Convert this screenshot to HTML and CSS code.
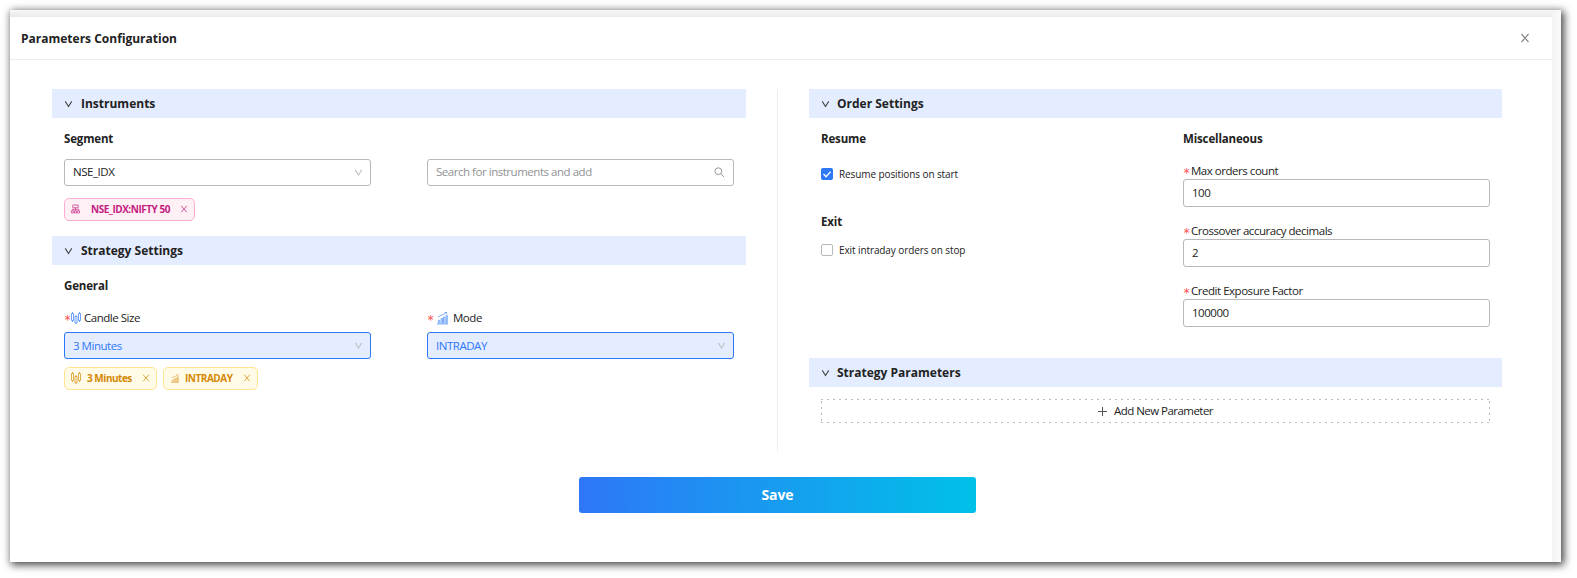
FILE: index.html
```html
<!DOCTYPE html>
<html lang="en">
<head>
<meta charset="utf-8">
<title>Parameters Configuration</title>
<link rel="stylesheet" href="styles.css">
</head>
<body>
<svg width="0" height="0" class="defs">
  <symbol id="down" viewBox="0 0 10 10"><path d="M1.400 2.100 5 7.700 8.600 2.100" fill="none" stroke="currentColor" stroke-width="1.200"/></symbol>
  <symbol id="close" viewBox="0 0 10 10"><path d="M1.500 1 8.500 9M8.500 1 1.500 9" fill="none" stroke="currentColor" stroke-width="1.200"/></symbol>
  <symbol id="candles" viewBox="0 0 10 12"><path d="M.5 1.500h2v7H.5zM4 4.500h2v6.500H4zM7.500 1.500h2v7H7.500zM1.500 0V1.500M1.500 8.500V10M5 3V4.500M5 11v1M8.500 0V1.500M8.500 8.500V10" fill="none" stroke="currentColor" stroke-width=".9"/></symbol>
  <symbol id="chart" viewBox="0 0 12 14"><path d="M0 13.500h12M1.500 13V9.500h1.500V13M4.500 13V7.500H6V13M7.200 13V6h1.500V13M10 13V4h1.200v9M1 6 4.500 4 7 3.300 10 1M8.500 1H10.500V2.500" fill="none" stroke="currentColor" stroke-width=".9"/></symbol>
</svg>
<div class="frame">
  <main class="modal">
    <header class="modal-head"><h1>Parameters Configuration</h1><svg class="close"><use href="#close"/></svg></header>
    <div class="columns">
      <div class="col">
        <section class="instruments">
          <h2><svg><use href="#down"/></svg><span>Instruments</span></h2>
          <div class="body">
            <h3><span>Segment</span></h3>
            <div class="pair">
              <div class="field"><span>NSE_IDX</span><svg class="arrow"><use href="#down"/></svg></div>
              <div class="field search"><span>Search for instruments and add</span><svg class="glass" viewBox="0 0 11 11"><circle cx="4.300" cy="4.200" r="3.400"/><path d="m6.800 6.700 3.400 3.500"/></svg></div>
            </div>
            <div class="tags"><div class="tag pink"><svg class="tree" viewBox="0 0 10 10"><path d="M2 .6h6v3H2zM5 3.600V7M1.500 7V5.300h7V7M.5 7h2.500v2.400H.5zM3.800 7h2.400v2.400H3.800zM7 7h2.500v2.400H7z"/></svg><span>NSE_IDX:NIFTY 50</span><svg class="x"><use href="#close"/></svg></div></div>
          </div>
        </section>
        <section>
          <h2><svg><use href="#down"/></svg><span>Strategy Settings</span></h2>
          <div class="body">
            <h3><span>General</span></h3>
            <div class="pair">
              <div>
                <div class="label"><i>*</i><svg class="candle"><use href="#candles"/></svg><span>Candle Size</span></div>
                <div class="field active"><span>3 Minutes</span><svg class="arrow"><use href="#down"/></svg></div>
              </div>
              <div>
                <div class="label"><i>*</i><svg class="bars"><use href="#chart"/></svg><span>Mode</span></div>
                <div class="field active"><span>INTRADAY</span><svg class="arrow"><use href="#down"/></svg></div>
              </div>
            </div>
            <div class="tags low">
              <div class="tag gold"><svg class="candle"><use href="#candles"/></svg><span>3 Minutes</span><svg class="x"><use href="#close"/></svg></div>
              <div class="tag gold second"><svg class="mini"><use href="#chart"/></svg><span>INTRADAY</span><svg class="x"><use href="#close"/></svg></div>
            </div>
          </div>
        </section>
      </div>
      <div class="divider"></div>
      <div class="col right">
        <section class="orders">
          <h2><svg><use href="#down"/></svg><span>Order Settings</span></h2>
          <div class="body pair">
            <div>
              <h3><span>Resume</span></h3>
              <div class="check"><b class="box on"><svg viewBox="0 0 12 12"><path d="m2.500 6 2.600 2.700 4.400-4.900"/></svg></b><span>Resume positions on start</span></div>
              <h3 class="exit"><span>Exit</span></h3>
              <div class="check stop"><b class="box"></b><span>Exit intraday orders on stop</span></div>
            </div>
            <div class="misc">
              <h3><span>Miscellaneous</span></h3>
              <div class="label"><i>*</i><span>Max orders count</span></div>
              <div class="field"><span>100</span></div>
              <div class="label"><i>*</i><span>Crossover accuracy decimals</span></div>
              <div class="field"><span>2</span></div>
              <div class="label"><i>*</i><span>Credit Exposure Factor</span></div>
              <div class="field"><span>100000</span></div>
            </div>
          </div>
        </section>
        <section>
          <h2><svg><use href="#down"/></svg><span>Strategy Parameters</span></h2>
          <div class="body"><div class="add"><svg viewBox="0 0 9 9"><path d="M4.500 0v9M0 4.500h9"/></svg><span>Add New Parameter</span></div></div>
        </section>
      </div>
    </div>
    <div class="save"><span>Save</span></div>
  </main>
</div>
</body>
</html>
```
FILE: styles.css
```css
* { box-sizing: border-box; }
body { margin: 0; padding: 10px 16px 16px 10px; height: 578px; overflow: hidden; background: #fff; font: 11.5px/18px "Open Sans", sans-serif; letter-spacing: -.47px; color: #222; }
.defs { display: block; position: absolute; }
h1, h2, h3 { margin: 0; font-size: 12px; font-weight: 700; letter-spacing: 0; }
span { white-space: nowrap; }
svg { flex: none; overflow: visible; }
.frame { width: 1551px; height: 552px; padding: 7px 9px 0 0; background: linear-gradient(90deg, transparent 1542px, #f3f3f3 1542px, #fafafa), linear-gradient(#f7f7f7, #eaeaea 7px, #f8f8f8 20px); box-shadow: 2px 2px 8px 1px #000b; }
.modal { width: 1542px; height: 545px; background: #fff; }
.modal-head { height: 43px; padding: 0 22px 0 11px; display: flex; align-items: center; justify-content: space-between; border-bottom: 1px solid #ececec; }
.modal-head h1 { padding-top: 2px; }
.close { width: 10px; height: 10px; color: #888; }
.columns { display: flex; padding: 29px 50px 0 42px; height: 392px; }
.col { width: 694px; flex: none; }
.col.right { width: 693px; }
.divider { width: 1px; flex: none; background: #eee; margin: 0 31px; }
.instruments { height: 147px; }
.orders { height: 269px; }
h2 { display: flex; align-items: center; height: 29px; padding-left: 12px; background: #e4edff; gap: 8px; }
.right h2 { gap: 7px; }
h2 svg { width: 9px; height: 10px; color: #444; }
.body { padding: 12px 12px 0; }
h3 { height: 18px; display: flex; align-items: center; font-size: 11.5px; letter-spacing: -.15px; }
.pair { display: grid; grid-template-columns: 307px 307px; column-gap: 56px; }
.orders .pair { column-gap: 55px; }
.instruments .pair { margin-top: 11px; }
.field { display: flex; align-items: center; justify-content: space-between; width: 307px; height: 27px; border: 1px solid #b8b8b8; border-radius: 3px; padding: 0 7px 0 8px; }
.instruments .field { padding-bottom: 1px; }
.search { color: #929292; padding-right: 8px; }
.arrow { width: 9px; height: 9px; color: #c0c0c0; }
.glass { width: 11px; height: 11px; fill: none; stroke: #999; }
.active { color: #2e77f7; background: #e4edff; border-color: #2e77f7; }
.tags { display: flex; gap: 6px; margin-top: 12px; }
.tags.low { margin-top: 8px; }
.tag { display: flex; align-items: center; height: 23px; border: 1px solid; border-radius: 5px; padding: 0 6px 1px; font-weight: 700; font-size: 10px; letter-spacing: -.48px; width: 93px; }
.tag .x { width: 8px; height: 8px; margin-left: auto; opacity: .75; }
.pink { width: 131px; color: #c41d7f; background: #fff0f6; border-color: #ffadd2; }
.pink span { margin-left: 11px; }
.tree { width: 9px; height: 10px; fill: none; stroke: #ce4594; stroke-width: .9; }
.gold { color: #d48806; background: #fffbe6; border-color: #ffe58f; }
.gold svg { opacity: .75; }
.gold span { margin-left: 6px; }
.second { width: 95px; }
.mini { width: 8px; height: 9px; }
.second .mini { margin-left: 1px; }
.label { display: flex; align-items: center; height: 18px; }
.label i { width: 8px; color: #ff4d4f; font: 12px/16px "DejaVu Sans Mono", monospace; height: 12px; }
.body > .pair > div > .label { margin: 14px 0 5px; }
.candle { width: 10px; height: 12px; color: #5c96fa; }
.gold .candle { color: #d48806; }
.label .candle { margin: 0 3px 0 -1px; }
.label .bars { width: 11px; height: 14px; color: #5c96fa; margin: 0 5px 0 2px; }
.check { display: flex; align-items: center; height: 18px; margin-top: 17px; gap: 6px; font-size: 10px; letter-spacing: -.1px; }
.box { width: 12px; height: 12px; border: 1px solid #b8b8b8; border-radius: 2px; }
.box.on { background: #2e77f7; border: 0; }
.box svg { display: block; fill: none; stroke: #fff; stroke-width: 1.3; }
.exit { margin-top: 29px; padding-top: 1px; }
.check.stop { margin-top: 11px; }
.orders .body > .misc > .label { margin: 13px 0 0; padding-top: 1px; }
.orders .body > .misc > .field + .label { margin-top: 14px; }
.misc .field { height: 28px; }
.add { height: 24px; background: repeating-linear-gradient(90deg, #bbb 0 2px, transparent 2px 6px) top / 100% 1px no-repeat, repeating-linear-gradient(90deg, #bbb 0 2px, transparent 2px 6px) bottom / 100% 1px no-repeat, repeating-linear-gradient(transparent 0 2px, #bbb 2px 4px, transparent 4px 6px) left / 1px 100% no-repeat, repeating-linear-gradient(transparent 0 2px, #bbb 2px 4px, transparent 4px 6px) right / 1px 100% no-repeat; display: flex; align-items: center; justify-content: center; gap: 7px; }
.add span { letter-spacing: -.54px; }
.add svg { width: 9px; height: 9px; stroke: #555; }
.save { width: 397px; height: 36px; margin: 25px 0 0 569px; border-radius: 3px; background: linear-gradient(90deg, #2e77f7, #00c1e8); color: #fff; display: flex; align-items: center; justify-content: center; font-weight: 700; font-size: 14px; letter-spacing: -.1px; }
```
